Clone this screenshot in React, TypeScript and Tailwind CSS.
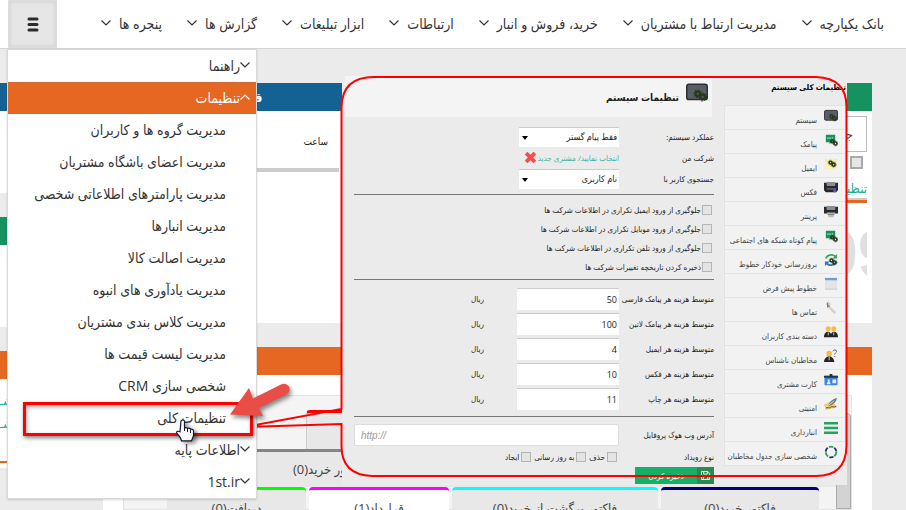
import React from "react";

const NAV = [
  "بانک یکپارچه",
  "مدیریت ارتباط با مشتریان",
  "خرید، فروش و انبار",
  "ارتباطات",
  "ابزار تبلیغات",
  "گزارش ها",
  "پنجره ها",
];

const SUB_MENU = [
  "مدیریت گروه ها و کاربران",
  "مدیریت اعضای باشگاه مشتریان",
  "مدیریت پارامترهای اطلاعاتی شخصی",
  "مدیریت انبارها",
  "مدیریت اصالت کالا",
  "مدیریت یادآوری های انبوه",
  "مدیریت کلاس بندی مشتریان",
  "مدیریت لیست قیمت ها",
  "شخصی سازی CRM",
  "تنظیمات کلی",
];

const SIDE = [
  ["سیستم", "monitor"],
  ["پیامک", "sms"],
  ["ایمیل", "mail"],
  ["فکس", "fax"],
  ["پرینتر", "printer"],
  ["پیام کوتاه شبکه های اجتماعی", "sms"],
  ["بروزرسانی خودکار خطوط", "refresh"],
  ["خطوط پیش فرض", "window"],
  ["تماس ها", "call"],
  ["دسته بندی کاربران", "users"],
  ["مخاطبان ناشناس", "unknown"],
  ["کارت مشتری", "card"],
  ["امنیتی", "sign"],
  ["انبارداری", "bars"],
  ["شخصی سازی جدول مخاطبان", "cycle"],
];

const CHECKS = [
  "جلوگیری از ورود ایمیل تکراری در اطلاعات شرکت ها",
  "جلوگیری از ورود موبایل تکراری در اطلاعات شرکت ها",
  "جلوگیری از ورود تلفن تکراری در اطلاعات شرکت ها",
  "ذخیره کردن تاریخچه تغییرات شرکت ها",
];

const COSTS = [
  ["متوسط هزینه هر پیامک فارسی", "50"],
  ["متوسط هزینه هر پیامک لاتین", "100"],
  ["متوسط هزینه هر ایمیل", "4"],
  ["متوسط هزینه هر فکس", "10"],
  ["متوسط هزینه هر چاپ", "11"],
];

const EVENTS = ["حذف", "به روز رسانی", "ایجاد"];

const TABS = [
  ["فاکتور خرید(0)", "w-[158px] border-[#00007f] bg-[#e8e8e8]"],
  ["فاکتور برگشت از خرید(0)", "w-[206px] border-[#00ffff] bg-[#e8e8e8]"],
  ["قرارداد(1)", "w-[140px] border-[#ff00ff] bg-white"],
  ["دریافت(0)", "w-[139px] border-[#00ff00] bg-[#e8e8e8]"],
];

function Chevron({ up = false }: { up?: boolean }) {
  return (
    <svg width="10" height="6" viewBox="0 0 10 6" fill="none" stroke="currentColor" strokeWidth="1.2" className="shrink-0">
      <path d={up ? "M.5 5.500 5 1l4.500 4.500" : "M.5.5 5 5 9.500.5"} />
    </svg>
  );
}

function Gears({ x = 7, y = 7 }: { x?: number; y?: number }) {
  return (
    <g transform={`translate(${x} ${y})`} fill="none" stroke="#28391f">
      <circle cx="2" cy="2" r="1.500" strokeWidth="1.600" />
      <circle cx="5.300" cy="4.200" r="1.600" strokeWidth="1.700" />
      <circle cx="2" cy="2" r="2.600" strokeWidth=".7" strokeDasharray="1 1" />
      <circle cx="5.300" cy="4.200" r="2.700" strokeWidth=".7" strokeDasharray="1 1" />
    </g>
  );
}

function Icon({ name, big = false }: { name: string; big?: boolean }) {
  const shapes: Record<string, React.ReactNode> = {
    monitor: (
      <>
        <rect x=".5" y="1.500" width="14" height="10.500" rx="1.500" fill="#595d66" stroke="#2c2e33" />
        <Gears x={6} y={6} />
      </>
    ),
    sms: (
      <>
        <path d="M2 2h10v8H8l-2 2v-2H2z" fill="#16935b" />
        <path d="M3.500 5.500h7" stroke="#d9f3e6" strokeWidth="1.500" strokeDasharray="1.400 1" />
        <Gears x={7} y={7} />
      </>
    ),
    mail: (
      <>
        <path d="M1 2h13v11H1z" fill="#f9f0b4" />
        <path d="m1 2 6.500 6L14 2" stroke="#efe08d" fill="none" />
        <Gears x={5} y={4} />
      </>
    ),
    fax: (
      <>
        <path d="M3 1h9v4H3z" fill="#8a8d91" />
        <path d="M0 2h3v3h9V2h3v8l-2 2H2l-2-2z" fill="#26282b" />
        <path d="M3 8.500h9" stroke="#888" />
        <path d="M10 8h3v4h-3z" fill="#5a4fe0" />
      </>
    ),
    printer: (
      <>
        <path d="M3 1h9v4H3z" fill="#8a8d91" />
        <path d="M0 2h3v3h9V2h3v7H0z" fill="#26282b" />
        <path d="M3 8h9l-2 5H5z" fill="#b9bdb9" />
        <path d="M4 10h7" stroke="#777" />
      </>
    ),
    refresh: (
      <>
        <path d="M2 6a6 5 0 0 1 10-2.500" stroke="#35a85f" strokeWidth="2" fill="none" />
        <path d="M14 1v5H9z" fill="#35a85f" />
        <path d="M13 9a6 5 0 0 1-10 2.500" stroke="#2c78b8" strokeWidth="2" fill="none" />
        <path d="M1 14V9h5z" fill="#2c78b8" />
        <Gears x={6} y={6} />
      </>
    ),
    window: (
      <>
        <path d="M1 1h13v12H1z" fill="#e2e5e7" />
        <path d="M1 1h13v2.500H1z" fill="#6d9cd6" />
        <path d="M1 13h13" stroke="#c3c7ca" />
      </>
    ),
    call: (
      <>
        <path d="m4 5 8 8" stroke="#d2d2d2" strokeWidth="2.500" />
        <path d="M4 2v4l2-1" stroke="#777" strokeWidth="1.500" fill="none" />
        <circle cx="4.500" cy="3" r="2" fill="none" stroke="#aaa" strokeDasharray="1 1" />
      </>
    ),
    users: (
      <>
        <circle cx="4.500" cy="4" r="2.700" fill="#f3bd42" />
        <circle cx="10.500" cy="4" r="2.700" fill="#f3bd42" />
        <path d="M0 13c0-7 7-7 7.500-3C8 6 15 6 15 13z" fill="#222426" />
        <path d="M4 8h1v3H4zM10 8h1v3h-1z" fill="#ddd" />
      </>
    ),
    unknown: (
      <>
        <circle cx="5.500" cy="5" r="3" fill="#f3bd42" />
        <path d="M0 14c0-8 11-8 11 0z" fill="#222426" />
        <path d="M5 8.500h1V12H5z" fill="#ddd" />
        <path d="M9.500 2.500c.5-2 4-2 4 0 0 1.500-2 1.500-2 3.500M11.500 7.500v1" stroke="#555" fill="none" />
      </>
    ),
    card: (
      <>
        <rect x=".5" y="3" width="14" height="10" rx="1" fill="#3b85dc" />
        <path d="M0 3h15v2H0zM6 1h3v3H6z" fill="#27343f" />
        <path d="M3 12c0-4 4-4 4 0zM4 7h2v2H4zM9 7h4v4H9z" fill="#e6eefa" />
      </>
    ),
    sign: (
      <>
        <path d="m0 8 9-4 5 7-12 3z" fill="#edca6c" />
        <path d="M4 10C6 5 9 2 14 1c-1 4-3 6-7 8z" fill="#5d7f78" />
        <path d="m2 11 9-7" stroke="#e8e2cc" />
        <path d="M2 12c2-2 3 1 5-1s3 1 6-1" stroke="#55493a" fill="none" />
      </>
    ),
    bars: <path d="M0 2.500h15M0 7.500h15M0 12.500h15" stroke="#22a45d" strokeWidth="2.600" />,
    cycle: (
      <>
        <circle cx="7.500" cy="7.500" r="5.700" fill="none" stroke="#29a35c" strokeWidth="2" strokeDasharray="5 6.940" />
        <circle cx="7.500" cy="7.500" r="5.700" fill="none" stroke="#2b2f6e" strokeWidth="2" strokeDasharray="4.500 7.440" strokeDashoffset="-6" />
      </>
    ),
  };
  return (
    <svg viewBox="0 0 15 15" className={big ? "size-[22px] shrink-0" : "size-[14px] shrink-0"}>
      {shapes[name]}
    </svg>
  );
}

const TINY_BOX = "size-[10px] shrink-0 appearance-none border border-[#b5b5b5] bg-[#e4e4e4]";
const LABEL = "w-[95px] shrink-0 whitespace-nowrap";
const MENU_ROW = "flex h-[32px] items-center whitespace-nowrap pb-[2px]";

function SettingsPanel() {
  return (
    <section className="absolute right-[59px] top-[76px] flex h-[409px] w-[505px] bg-[#ebebeb] text-[8px] leading-[12px] text-[#222]">
      <aside className="w-[123px] shrink-0 pr-[1px]">
        <h3 className="flex h-[29px] items-start whitespace-nowrap pt-[5px] font-bold text-black">تنظیمات کلی سیستم</h3>
        <ul className="border border-b-0 border-[#e3e3e3] bg-[#f2f2f2]">
          {SIDE.map(([label, icon]) => (
            <li key={label} className="h-[24px] border-b border-[#e3e3e3]">
              <a href="#" className="flex h-[23px] gap-[7px] pr-[7px] text-[#444]">
                <span className="pt-[3px]"><Icon name={icon} /></span>
                <span className="whitespace-nowrap pt-[8px]">{label}</span>
              </a>
            </li>
          ))}
        </ul>
      </aside>
      <div className="min-w-0 flex-1 pl-[3px]">
        <h2 className="mr-[12px] flex h-[41px] items-center gap-[7px] bg-[#f4f4f4] pr-[4px] text-[10px] font-bold text-[#222]">
          <span className="pb-[8px]"><Icon name="monitor" big /></span>
          <span>تنظیمات سیستم</span>
        </h2>
        <form className="pl-[9px] pr-[10px] pt-[9px]" onSubmit={(e) => e.preventDefault()}>
          <div className="flex h-[21px] items-center">
            <label htmlFor="mode" className={LABEL}>عملکرد سیستم:</label>
            <span className="relative">
              <select id="mode" className="h-[20px] w-[100px] appearance-none border-t border-[#ccc] bg-white pr-[2px] text-[9px] text-[#222]">
                <option>فقط پیام گستر</option>
              </select>
              <i className="absolute left-[3px] top-[9px] border-x-[3px] border-t-[4px] border-x-transparent border-t-black" />
            </span>
          </div>
          <div className="flex h-[21px] items-center">
            <span className={LABEL}>شرکت من</span>
            <span className="flex items-center whitespace-nowrap text-[#3fb5a0]">
              <a href="#">انتخاب نمایید</a>/<a href="#" className="mr-[2px]">مشتری جدید</a>
              <button type="button" aria-label="حذف شرکت" className="mr-[2px]">
                <svg viewBox="0 0 10 10" className="size-[11px]" stroke="#fb4a48" strokeWidth="3.500">
                  <path d="m1 1 8 8M9 1 1 9" />
                </svg>
              </button>
            </span>
          </div>
          <div className="flex h-[21px] items-center">
            <label htmlFor="search-by" className={LABEL}>جستجوی کاربر با</label>
            <span className="relative">
              <select id="search-by" className="h-[20px] w-[100px] appearance-none border-t border-[#ccc] bg-white pr-[2px] text-[9px] text-[#222]">
                <option>نام کاربری</option>
              </select>
              <i className="absolute left-[3px] top-[9px] border-x-[3px] border-t-[4px] border-x-transparent border-t-black" />
            </span>
          </div>
          <hr className="mb-[5px] mt-[5px] border-[#777]" />
          {CHECKS.map((text) => (
            <label key={text} className="flex h-[19px] items-center gap-[1px] whitespace-nowrap pr-[2px]">
              <input type="checkbox" className={TINY_BOX} />
              {text}
            </label>
          ))}
          <hr className="mb-[8px] mt-[3px] border-[#777]" />
          <div className="flex flex-col gap-[3px]">
            {COSTS.map(([label, value], i) => (
              <div key={label} className="flex h-[22px] items-center">
                <label htmlFor={`cost-${i}`} className={LABEL}>{label}</label>
                <input id={`cost-${i}`} defaultValue={value} className="h-[22px] w-[102px] border-t border-[#ccc] bg-white pr-[2px] text-[9px] text-[#222]" />
                <span className="mr-[33px]">ریال</span>
              </div>
            ))}
          </div>
          <hr className="mb-[7px] mt-[6px] border-[#777]" />
          <div className="flex h-[22px] items-center">
            <label htmlFor="hook" className={LABEL}>آدرس وب هوک پروفایل</label>
            <input id="hook" dir="ltr" placeholder="http://" className="h-[22px] min-w-0 flex-1 rounded-[2px] border border-[#ddd] bg-white px-[6px] font-['Liberation_Sans',sans-serif] text-[10px] italic placeholder:text-[#999]" />
          </div>
          <fieldset className="flex h-[21px] items-center">
            <span className="w-[97px] shrink-0">نوع رویداد</span>
            <span className="flex gap-[3px]">
              {EVENTS.map((text) => (
                <label key={text} className="flex items-center gap-[2px] whitespace-nowrap">
                  <input type="checkbox" className={TINY_BOX} />
                  {text}
                </label>
              ))}
            </span>
          </fieldset>
          <button type="submit" className="flex h-[17px] w-[79px] items-center bg-[#13b066] text-white">
            <span className="flex h-[17px] w-[17px] items-center justify-center bg-[#2b8a50]">
              <svg viewBox="0 0 10 10" className="size-[9px]" fill="none" stroke="#fff">
                <path d="M.5.5h7l2 2v7h-9zM3 .5v3h4v-3M2.500 9.500V6h5v3.500" />
              </svg>
            </span>
            <span className="flex-1 whitespace-nowrap text-center">ذخیره کردن</span>
          </button>
        </form>
      </div>
      {/* callout outline with its pointer */}
      <svg className="pointer-events-none absolute left-[-100px] top-0 h-[409px] w-[606px]" viewBox="0 0 606 409" fill="none" stroke="#ff0000" strokeWidth="2">
        <path d="M99.500 333V31Q100 1 132 1H574Q604.500 2 604.500 31V370Q604 400 574 400H130Q99.500 399 99.500 370V348L3 351Z" />
      </svg>
    </section>
  );
}

function MainMenu() {
  return (
    <nav className="absolute left-[7px] top-[49px] w-[250px] border border-[#d9d9d9] bg-white text-[14px] text-[#333] shadow-[0_1px_2px_rgba(0,0,0,0.15)]">
      <a href="#" className={`${MENU_ROW} pr-[6px]`}><Chevron />راهنما</a>
      <a href="#" className={`${MENU_ROW} border-y border-[#c96a3d] bg-[#e56722] pr-[6px] text-white`}><Chevron up />تنظیمات</a>
      {SUB_MENU.map((text) => (
        <a key={text} href="#" className={`${MENU_ROW} pr-[30px]`}>{text}</a>
      ))}
      <a href="#" className={`${MENU_ROW} pr-[6px]`}><Chevron />اطلاعات پایه</a>
      <a href="#" className={`${MENU_ROW} pr-[6px]`}><Chevron />1st.ir</a>
      <span className="pointer-events-none absolute left-[15px] right-[3px] top-[352px] h-[34px] border-[3px] border-[#ff0000] shadow-[1px_2px_4px_rgba(0,0,0,0.5),inset_1px_2px_4px_rgba(0,0,0,0.35)]" />
      <svg className="pointer-events-none absolute left-[166px] top-[325px] h-[76px] w-[130px] overflow-visible" viewBox="0 0 130 76">
        <g style={{ filter: "drop-shadow(2px 3px 2px rgba(0,0,0,.45))" }}>
          <path d="M56 39.500 75 13l4 10.500 28-14q5-2 8 2 2 5-3 8L85 33l4 8Z" fill="#ea4c46" />
        </g>
        <g style={{ filter: "drop-shadow(3px 2px 2px rgba(0,0,0,.45))" }}>
          <path d="M7 46q2-2 3.500 0v7q2-1 3 .5 2-1 3 .8 2.500-.5 3 1.500v5l-2 5h-10l-1-3-4-5q0-2.500 3.500-1z" fill="#fff" stroke="#111833" strokeWidth="1.200" />
          <path d="M10.500 53v3M13.500 54v3M16.500 55v3" stroke="#111833" fill="none" />
        </g>
      </svg>
    </nav>
  );
}

export default function App() {
  return (
    <div dir="rtl" className="relative flex h-screen flex-col overflow-hidden bg-[#ebebeb] font-['Open_Sans','DejaVu_Sans_Condensed','DejaVu_Sans',sans-serif]">
      <header className="flex h-[49px] shrink-0 items-center justify-between border-b border-[#d5d5d5] bg-white pl-[8px] pr-[22px] text-[14px] text-[#333]">
        <nav className="flex h-[48px] items-center gap-[25px] pb-[2px]">
          {NAV.map((text) => (
            <a key={text} href="#" className="flex items-center gap-[8px] whitespace-nowrap">
              {text}
              <Chevron />
            </a>
          ))}
        </nav>
        <button type="button" aria-label="منو" className="flex h-[48px] w-[49px] items-center justify-center border border-[#ddd] bg-[#e6e6e6] shadow-[inset_0_0_5px_rgba(0,0,0,0.12)]">
          <svg width="12" height="15" viewBox="0 0 12 15" stroke="#2b2b2b" strokeWidth="3" strokeLinecap="round">
            <path d="M2 2h8M2 7.500h8M2 13h8" />
          </svg>
        </button>
      </header>

      <main className="flex min-h-0 flex-1 gap-[24px] pr-[34px] pt-[34px]">
        <div className="flex min-w-0 flex-1 flex-col gap-[24px]">
          <div className="flex h-[240px] shrink-0 gap-[24px]">
            <section className="flex w-[438px] flex-col bg-white">
              <div className="h-[28px] bg-[#169261]" />
              <div className="flex flex-col items-start pr-[5px] pt-[5px]">
                <input aria-label="جستجو" defaultValue="جـ" className="h-[36px] w-[200px] border border-[#bbb] pr-[13px] text-[13px] text-[#444]" />
                <input type="checkbox" aria-label="انتخاب" className="mr-[4px] mt-[4px] size-[13px] appearance-none border-2 border-[#aaa] bg-[#e6e6e6]" />
                <a href="#" className="mt-[9px] h-[20px] text-[13px] leading-[20px] text-[#10ad9a]">تنظیـ</a>
                <span className="h-[5px] w-[200px] border-t-2 border-[#ccc] bg-[#e56722]" />
                <span dir="ltr" className="mt-[24px] w-[47px] overflow-hidden font-['Liberation_Sans',sans-serif] text-[68px] font-bold leading-[52px] text-[#e0e0e0]">99</span>
              </div>
            </section>
            <section className="flex flex-1 flex-col bg-white">
              <h3 className="h-[28px] bg-[#146193] text-center text-[13px] font-bold leading-[28px] text-white">قـ</h3>
              <div className="mr-[71px] h-[61px] border-b-4 border-[#ccc] pr-[11px] pt-[20px] text-[10px] leading-[20px] text-[#222]">ساعت</div>
            </section>
          </div>
          <section className="flex min-h-0 flex-1 flex-col bg-white">
            <div className="h-[28px] shrink-0 bg-[#e56722]" />
            <div className="relative mx-[20px] mt-[20px] flex min-h-0 flex-1 flex-col border border-[#e2e2e2] bg-[#f4f4f4] text-[13px] text-[#444]">
              <div className="flex h-[56px] shrink-0 items-end border-b-[3px] border-[#858585] pr-[14px]">
                <span className="ml-[182px] h-[39px] flex-1 rounded-t-[4px] border-l border-t-[3px] border-l-[#ccc] border-t-[#ff0000] bg-[#e8e8e8]" />
              </div>
              <div className="flex h-[35px] shrink-0 items-center justify-end bg-[#e8e8e8] pl-[169px]">
                <span className="whitespace-nowrap">ور خرید(0)</span>
              </div>
              <div className="flex gap-[3px] pr-[32px]">
                {TABS.map(([label, look]) => (
                  <button key={label} type="button" className={`${look} h-[40px] shrink-0 whitespace-nowrap rounded-t-[4px] border-t-[3px] text-center`}>
                    {label}
                  </button>
                ))}
              </div>
              <div className="absolute bottom-0 right-0 top-[17px] w-[15px] rounded-t-[4px] border border-[#aaa] bg-[#d3d3d3]" />
            </div>
          </section>
        </div>
        <div className="flex w-[79px] shrink-0 flex-col gap-[24px]">
          <div className="h-[110px] bg-white"><div className="h-[28px] bg-[#146193]" /></div>
          <div className="h-[110px] bg-white"><div className="h-[28px] bg-[#169261]" /></div>
          <div className="h-[117px] bg-white text-left text-[12px] leading-[23px] text-[#10ad9a]">
            <div className="mb-[10px] h-[28px] bg-[#e56722]" />
            <a href="#" className="block">مشـ</a>
            <a href="#" className="block">مشـ</a>
            <div className="mt-[26px] h-[2px] bg-[#e56722]" />
          </div>
        </div>
      </main>

      <SettingsPanel />
      <MainMenu />
    </div>
  );
}
